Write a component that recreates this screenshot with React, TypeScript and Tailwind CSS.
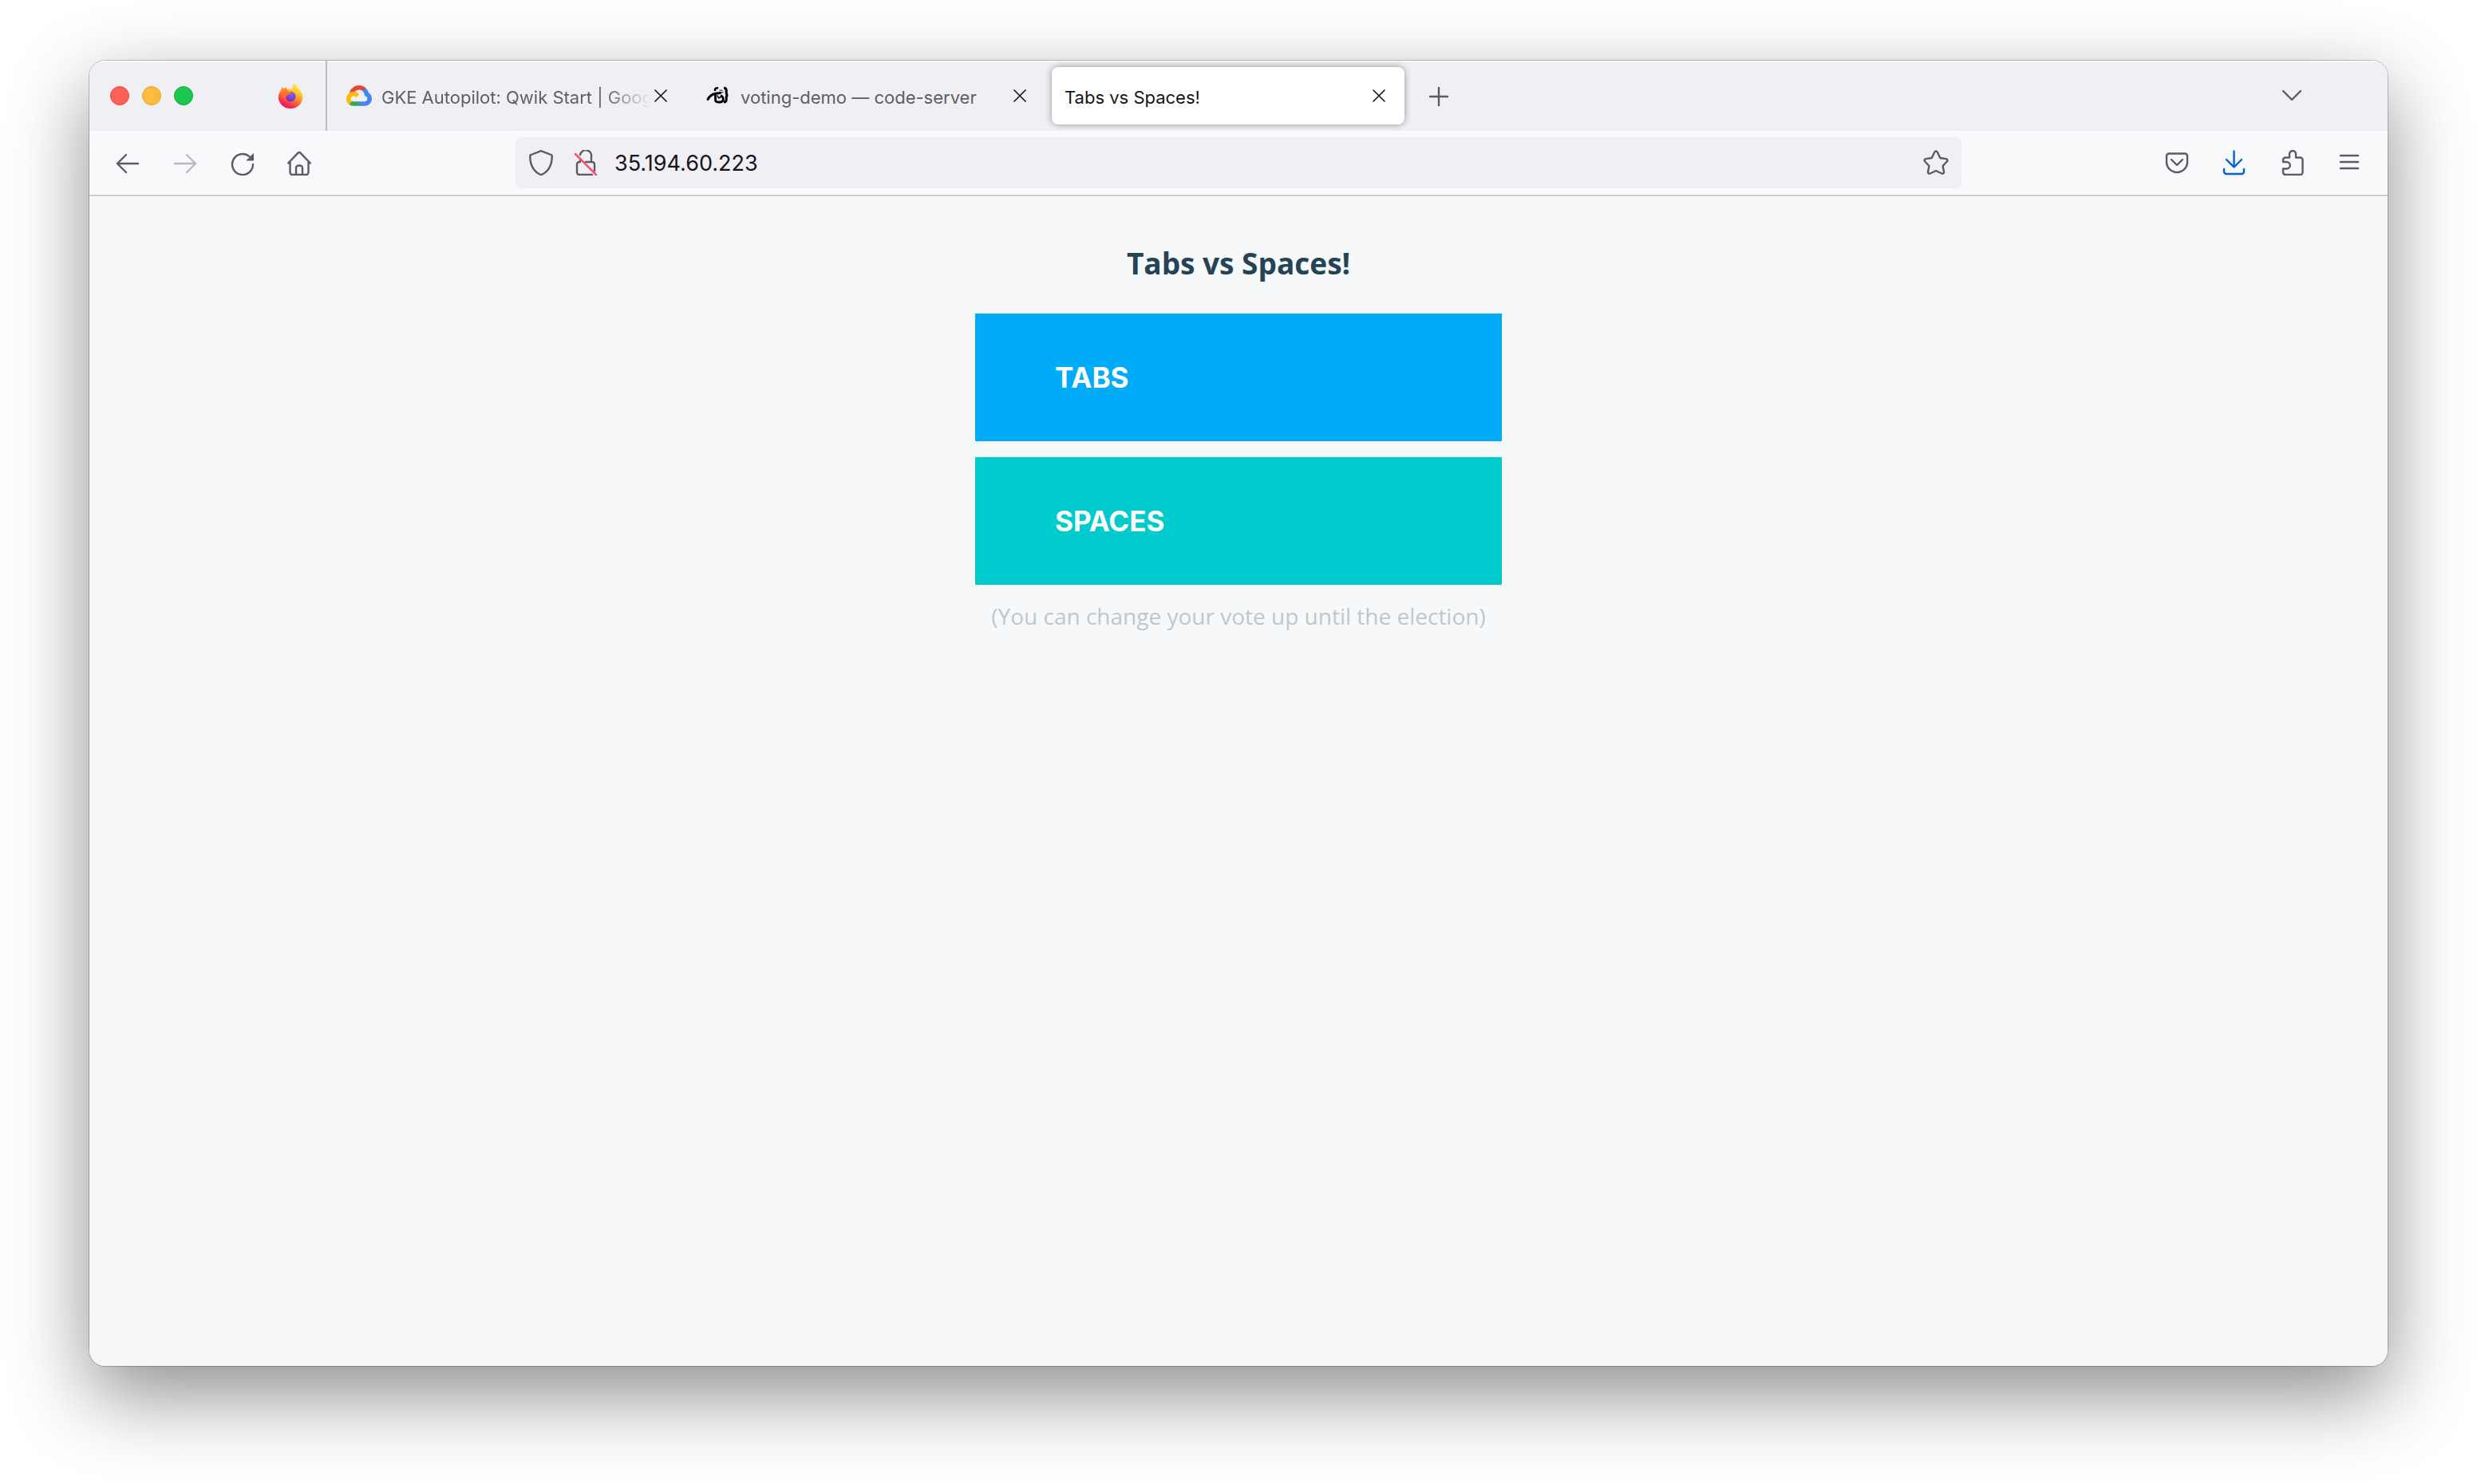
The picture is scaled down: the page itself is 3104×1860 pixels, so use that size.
import type { ReactNode } from "react";

const stroke = {
  fill: "none",
  stroke: "currentColor",
  strokeWidth: 2.4,
  strokeLinecap: "round" as const,
  strokeLinejoin: "round" as const,
};

function Icon({ children }: { children: ReactNode }) {
  return (
    <svg viewBox="0 0 32 32" className="size-8 shrink-0" {...stroke} aria-hidden="true">
      {children}
    </svg>
  );
}

function FirefoxLogo() {
  return (
    <svg viewBox="0 0 32 32" className="size-8" aria-hidden="true">
      <defs>
        <linearGradient id="ff-body" x1="0.8" y1="0.05" x2="0.3" y2="1">
          <stop offset="0" stopColor="#fff04a" />
          <stop offset="0.3" stopColor="#ffc22e" />
          <stop offset="0.55" stopColor="#ff7a33" />
          <stop offset="0.78" stopColor="#ff3647" />
          <stop offset="1" stopColor="#e3067e" />
        </linearGradient>
        <radialGradient id="ff-globe" cx="0.6" cy="0.3" r="0.8">
          <stop offset="0" stopColor="#a050f0" />
          <stop offset="0.5" stopColor="#7048d8" />
          <stop offset="1" stopColor="#5a35a8" />
        </radialGradient>
        <linearGradient id="ff-flame" x1="0" y1="0" x2="0.4" y2="1">
          <stop offset="0" stopColor="#ff9a1f" />
          <stop offset="1" stopColor="#ff5a36" />
        </linearGradient>
      </defs>
      <path
        fill="url(#ff-body)"
        d="M20.6 0.8c2.6 1.4 4.2 3.6 4.6 6.2l0.6-0.4c3.4 2.7 5.500 6.600 5.500 11.100a15.200 14.400 0 0 1-30.400 0c0-4 1.500-7.300 3.700-9.700 0-1.200 0.300-2.100 0.900-2.900l1.500 2.300 3.900-2.100 0.300 2.800c2-0.800 4.700-0.900 7 0-0.600-2.800 0.600-5.200 2.400-7.300z"
      />
      <circle cx="16.2" cy="17" r="6.3" fill="url(#ff-globe)" />
      <path
        fill="url(#ff-flame)"
        d="M4.600 8l0.900-2.900 1.500 2.300 3.900-2.100 0.300 3.400c0.600 1.400 2.200 2.300 4.600 2.500 1.500 0.200 1.400 1.700 0.200 2.400l-2.700 1.200c-1 0.500-1.100 1.500-1.900 1.800-1.400 0.500-1.700 2.400-0.300 3.500-3 0-6.500-3-6.500-12.100z"
      />
    </svg>
  );
}

function CloudLogo() {
  return (
    <svg viewBox="0 0 256 206" className="w-8 shrink-0" aria-hidden="true">
      <path
        fill="#EA4335"
        d="M170.252 56.819l22.253-22.253 1.483-9.37C153.437-11.677 88.976-7.496 52.42 33.92 42.267 45.423 34.734 59.764 30.717 74.573l7.97-1.123 44.505-7.34 3.436-3.513c19.797-21.742 53.27-24.667 76.128-6.168l7.496.39z"
      />
      <path
        fill="#4285F4"
        d="M224.205 73.918a100.249 100.249 0 0 0-30.217-48.722l-31.232 31.232a55.515 55.515 0 0 1 20.379 44.037v5.544c15.35 0 27.797 12.445 27.797 27.796 0 15.352-12.446 27.485-27.797 27.485h-55.671l-5.466 5.934v33.34l5.466 5.231h55.67c39.93.311 72.553-31.494 72.864-71.424a72.303 72.303 0 0 0-31.793-60.453"
      />
      <path
        fill="#34A853"
        d="M71.87 205.796h55.593V161.29H71.87a27.275 27.275 0 0 1-11.4-2.498l-7.887 2.42-22.409 22.253-1.952 7.574c12.567 9.489 27.9 14.825 43.647 14.757"
      />
      <path
        fill="#FBBC05"
        d="M71.87 61.425C31.94 61.664-.237 94.228.001 134.158a72.301 72.301 0 0 0 28.222 56.88l32.248-32.246c-13.99-6.322-20.208-22.786-13.887-36.776 6.32-13.99 22.786-20.208 36.775-13.888a27.796 27.796 0 0 1 13.887 13.888l32.248-32.248A72.224 72.224 0 0 0 71.87 61.425"
      />
    </svg>
  );
}

function CoderLogo() {
  return (
    <svg viewBox="0 0 32 32" className="size-8 shrink-0" fill="none" stroke="#000" aria-hidden="true">
      <path d="M3 20.500C5.500 16 8.500 14 12 13.500c2.500-.3 4.500-1 6.500-1" strokeWidth="3" strokeLinecap="round" />
      <path d="M12 9c0-2 1-2.700 3-2.700" strokeWidth="2.6" strokeLinecap="round" />
      <path d="M12.500 14.500v6.500c0 2.200 1.200 3 3.500 3h2.500c2.500 0 3.800-1.500 3.800-3.700 0-2.300-1.300-3.800-3.300-4.800" strokeWidth="2.8" />
      <path d="M15 15.500l1.500 3.500 3-1.500" strokeWidth="1.6" />
      <path d="M23 6.300c2.400 0 3.200 1 3.200 3.200v2.700c0 1.600.4 2.600 1.800 2.900-1.400.3-1.800 1.300-1.800 2.900v2.800c0 2.200-.8 3.200-3.200 3.200" strokeWidth="3" />
      <path d="M17.500 9.200h4M17 11.700h5.500" strokeWidth="0.9" />
    </svg>
  );
}

function CloseIcon() {
  return (
    <svg viewBox="0 0 16 16" className="size-4" fill="none" stroke="#1b1b1f" strokeWidth="1.7" strokeLinecap="round" aria-hidden="true">
      <path d="M1 1l14 14M15 1L1 15" />
    </svg>
  );
}

function Tab({ title, icon, active = false, fade = false }: { title: string; icon?: ReactNode; active?: boolean; fade?: boolean }) {
  return (
    <div className="flex w-[450px] min-w-0 px-1 py-2">
      <div
        className={
          active
            ? "flex min-w-0 flex-1 items-center rounded-lg bg-white pr-6 pl-4 text-[#15141a] shadow-[0_0_8px_rgba(0,0,0,0.4)]"
            : "flex min-w-0 flex-1 items-center pr-6 pl-4 text-[#5f5f63]"
        }
      >
        <button type="button" role="tab" aria-selected={active} className="flex min-w-0 flex-1 items-center gap-3 text-left">
          {icon}
          <span
            className={
              fade
                ? "min-w-0 flex-1 [mask-image:linear-gradient(to_left,transparent_4px,black_64px)] pt-1 text-[22px] leading-8 whitespace-nowrap"
                : "min-w-0 flex-1 pt-1 text-[22px] leading-8 whitespace-nowrap"
            }
          >
            {title}
          </span>
        </button>
        <button type="button" aria-label={`Close ${title}`} className="shrink-0">
          <CloseIcon />
        </button>
      </div>
    </div>
  );
}

function ToolButton({ label, tone = "text-[#5b5b66]", children }: { label: string; tone?: string; children: ReactNode }) {
  return (
    <button type="button" aria-label={label} className={`flex h-16 w-[72px] shrink-0 items-center justify-center ${tone}`}>
      <Icon>{children}</Icon>
    </button>
  );
}

function TabStrip() {
  return (
    <header className="flex h-[88px] items-stretch bg-[#f0eff4] shadow-[inset_0_2px_0_rgba(255,255,255,0.6)]">
      <div className="flex items-center gap-4 pl-[26px]">
        <button type="button" aria-label="Close window" className="size-6 rounded-full border border-[#e24b41] bg-[#ff5f57]" />
        <button type="button" aria-label="Minimize window" className="size-6 rounded-full border border-[#e1a02e] bg-[#febc3f]" />
        <button type="button" aria-label="Zoom window" className="size-6 rounded-full border border-[#14a83a] bg-[#19c84c]" />
      </div>
      <button type="button" aria-label="Firefox View" className="mr-1 ml-[82px] flex w-20 items-center justify-center">
        <FirefoxLogo />
      </button>
      <div className="w-0.5 bg-[#bcbbc0]" />
      <div role="tablist" className="ml-1 flex min-w-0">
        <Tab title="GKE Autopilot: Qwik Start | Goog" icon={<CloudLogo />} fade />
        <Tab title="voting-demo — code-server" icon={<CoderLogo />} />
        <Tab title="Tabs vs Spaces!" active />
      </div>
      <button type="button" aria-label="New tab" className="ml-1 flex w-[72px] items-center justify-center text-[#5b5b66]">
        <Icon>
          <path d="M15 6v22M4 17h22" />
        </Icon>
      </button>
      <button type="button" aria-label="List all tabs" className="mr-[84px] ml-auto flex w-[72px] items-center justify-center text-[#5b5b66]">
        <Icon>
          <path d="M5 10l11 11 11-11" />
        </Icon>
      </button>
    </header>
  );
}

function Toolbar() {
  return (
    <nav className="flex items-center justify-between border-b-2 border-[#cccccd] bg-[#f9f9fb] px-3 py-2">
      <div className="flex">
        <ToolButton label="Back">
          <path d="M29 17H3M14 6L3 17l11 11" />
        </ToolButton>
        <ToolButton label="Forward" tone="text-[#b9b9bf]">
          <path d="M3 17h26M18 6l11 11-11 11" />
        </ToolButton>
        <ToolButton label="Reload">
          <path d="M29 18a13 13 0 1 1-4.500-9.800" />
          <path d="M29.500 5v8h-8z" fill="currentColor" strokeWidth="1" />
        </ToolButton>
        <ToolButton label="Home">
          <path d="M1.200 16.500L13.500 3.600a2 2 0 0 1 2.900 0l12.400 12.900M3.500 14v14a3 3 0 0 0 3 3h17a3 3 0 0 0 3-3V14M11 31V22.500a3 3 0 0 1 3-3h2a3 3 0 0 1 3 3V31" />
        </ToolButton>
      </div>
      <div className="flex h-16 max-w-[1812px] min-w-0 flex-1 items-center gap-6 rounded-lg bg-[#f0eff4] px-4 text-[#5b5b66]">
        <button type="button" aria-label="Tracking protection">
          <Icon>
            <path d="M16 1.200L28.500 6a1.800 1.800 0 0 1 1.200 1.900C29.700 19 25.500 26.500 17 30.800a2.200 2.200 0 0 1-2 0C6.500 26.500 2.300 19 2.300 7.900A1.800 1.800 0 0 1 3.500 6z" />
          </Icon>
        </button>
        <button type="button" aria-label="Connection is not secure">
          <Icon>
            <path d="M9 6a7 7 0 0 1 14 2.500V15M16 15h8a3 3 0 0 1 3 3v8M24 31H8a3 3 0 0 1-3-3V18a3 3 0 0 1 3-3h1V12.500" />
            <path d="M3 5l26 26" stroke="#ff4f6b" strokeWidth="2.5" />
          </Icon>
        </button>
        <input
          type="text"
          aria-label="Address"
          defaultValue="35.194.60.223"
          className="-ml-1 min-w-0 flex-1 bg-transparent pt-0.5 text-[27px] leading-10 text-[#15141a] outline-none"
        />
        <button type="button" aria-label="Bookmark this page">
          <Icon>
            <path d="M14.300 2.500a1.900 1.900 0 0 1 3.400 0l3.600 7.500 7.600 1.100a1.900 1.900 0 0 1 1 3.200L24.600 20l1.400 7.500a1.900 1.900 0 0 1-2.700 2L16 26l-7.300 3.500a1.900 1.900 0 0 1-2.700-2l1.400-7.500-5.300-5.700a1.900 1.900 0 0 1 1-3.200L10.700 10z" />
          </Icon>
        </button>
      </div>
      <div className="flex">
        <ToolButton label="Save to Pocket">
          <path d="M6 4.500h20a3 3 0 0 1 3 3V15a13 13 0 0 1-26 0V7.500a3 3 0 0 1 3-3zM9 12l7 7 7-7" />
        </ToolButton>
        <ToolButton label="Downloads" tone="text-[#0061e0]">
          <path d="M15.500 1.500V21M6 12l9.500 9.500L25 12M3 24v3a3 3 0 0 0 3 3h19a3 3 0 0 0 3-3v-3" />
        </ToolButton>
        <ToolButton label="Extensions">
          <path d="M8 9.500h5V5a4 4 0 0 1 8 0v4.500H26.500a3 3 0 0 1 3 3V28a3 3 0 0 1-3 3H8a3 3 0 0 1-3-3v-4.500h4.500a4 4 0 0 0 0-8.500H5v-2.500a3 3 0 0 1 3-3z" />
        </ToolButton>
        <ToolButton label="Menu">
          <path d="M5 7h22M5 15h22M5 23h22" />
        </ToolButton>
      </div>
    </nav>
  );
}

const choices = [
  { name: "TABS", style: "bg-[#00abf8]" },
  { name: "SPACES", style: "bg-[#00cbcc]" },
];

export default function App() {
  return (
    <div className="flex min-h-screen bg-white px-28 pt-[76px] pb-[148px] font-['Inter',sans-serif]">
      <div className="flex min-w-0 flex-1 rounded-[20px] shadow-[0_0_0_1px_rgba(0,0,0,0.22),0_36px_100px_rgba(0,0,0,0.45)]">
        <div className="flex min-w-0 flex-1 flex-col overflow-hidden rounded-[20px] bg-[#f7f8fa]">
          <TabStrip />
          <Toolbar />
          <main className="mx-auto flex w-[660px] flex-col pt-14 text-center font-['Open_Sans',sans-serif]">
            <h1 className="text-[37px] leading-[55px] font-bold text-[#254356]">Tabs vs Spaces!</h1>
            <form className="mt-9 flex flex-col gap-5">
              {choices.map((choice) => (
                <button
                  key={choice.name}
                  type="button"
                  className={`h-40 px-[100px] text-left font-['Inter',sans-serif] text-[35px] leading-10 font-bold text-white ${choice.style}`}
                >
                  {choice.name}
                </button>
              ))}
            </form>
            <p className="mt-5 text-[28px] leading-[38px] text-[#bec8cc]">(You can change your vote up until the election)</p>
          </main>
        </div>
      </div>
    </div>
  );
}
